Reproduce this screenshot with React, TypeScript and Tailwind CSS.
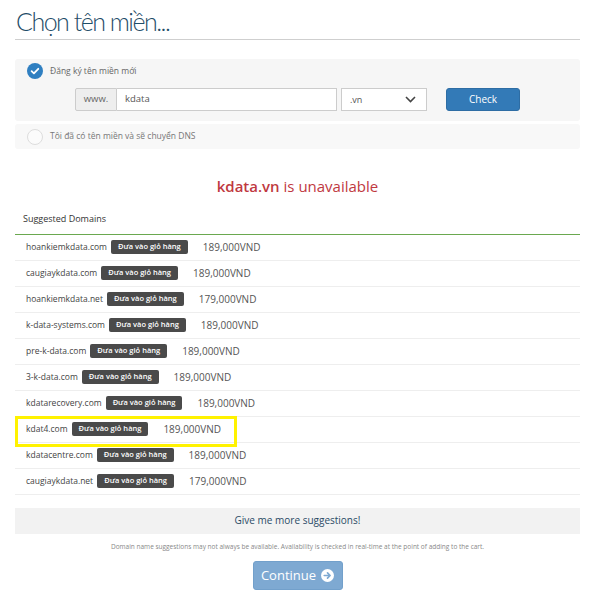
import React from 'react';

const suggestions = [
  { name: 'hoankiemkdata.com', price: '189,000VND' },
  { name: 'caugiaykdata.com', price: '189,000VND' },
  { name: 'hoankiemkdata.net', price: '179,000VND' },
  { name: 'k-data-systems.com', price: '189,000VND' },
  { name: 'pre-k-data.com', price: '189,000VND' },
  { name: '3-k-data.com', price: '189,000VND' },
  { name: 'kdatarecovery.com', price: '189,000VND' },
  { name: 'kdat4.com', price: '189,000VND', highlight: true },
  { name: 'kdatacentre.com', price: '189,000VND' },
  { name: 'caugiaykdata.net', price: '179,000VND' },
];

const CheckCircle = () => (
  <svg width="16" height="16" viewBox="0 0 16 16">
    <circle cx="8" cy="8" r="8" fill="#2f7fc1" />
    <path d="M4.6 8.2l2.3 2.2 4.4-4.6" fill="none" stroke="#fff" strokeWidth="1.8" strokeLinecap="round" strokeLinejoin="round" />
  </svg>
);

export default function App() {
  return (
    <div className="w-[600px] h-[600px] bg-white pl-[15px] pr-[20px] pt-[6px] overflow-hidden" style={{ fontFamily: '"Open Sans", "Noto Sans", sans-serif' }}>
      <h1 className="text-[25px] font-light text-[#1f4d68] leading-[30px] pl-[1px] pb-[3px] border-b border-[#cfcfcf] tracking-[-1.5px]" style={{ fontFamily: 'Lato, "Open Sans", sans-serif' }}>
        Chọn tên miền...
      </h1>

      <div className="mt-[19px] bg-[#f6f6f6] rounded-[3px] pl-[12px] pt-[4px] pb-[10px]">
        <div className="flex items-center gap-[7px] h-[16px]">
          <CheckCircle />
          <span className="text-[8.5px] text-[#666]">Đăng ký tên miền mới</span>
        </div>
        <div className="flex items-center mt-[9px] ml-[48px] h-[23px]">
          <div className="w-[42px] h-full flex items-center justify-center bg-[#eeeeee] border border-[#cccccc] rounded-l-[2px] text-[9.5px] text-[#666]">
            www.
          </div>
          <div className="w-[220px] h-full flex items-center pl-[8px] bg-white border border-l-0 border-[#cccccc] text-[9.5px] text-[#555]">
            kdata
          </div>
          <div className="w-[86px] h-full ml-[4px] flex items-center justify-between pl-[8px] pr-[10px] bg-white border border-[#cccccc] text-[9px] text-[#555]">
            <span>.vn</span>
            <svg width="11" height="7" viewBox="0 0 11 7">
              <path d="M1 1l4.5 4.5L10 1" fill="none" stroke="#444" strokeWidth="1.6" />
            </svg>
          </div>
          <div className="w-[74px] h-full ml-[19px] flex items-center justify-center bg-[#337ab7] border border-[#2e6da4] rounded-[3px] text-[10px] text-white">
            Check
          </div>
        </div>
      </div>

      <div className="mt-[3px] bg-[#f8f8f8] rounded-[3px] pl-[12px] h-[25px] flex items-center gap-[7px]">
        <span className="w-[16px] h-[16px] rounded-full border border-[#dddddd] bg-[#fbfbfb]" />
        <span className="text-[8.5px] text-[#777]">Tôi đã có tên miền và sẽ chuyển DNS</span>
      </div>

      <div className="text-center mt-[26px] text-[15px] text-[#c0393f] leading-[22px]">
        <span className="font-semibold">kdata.vn</span> is unavailable
      </div>

      <div className="mt-[15px] pl-[8px] pb-[8px] text-[9px] text-[#333] border-b border-[#6aa84f]">
        Suggested Domains
      </div>

      <div>
        {suggestions.map((s) => (
          <div key={s.name} className="relative flex items-center h-[26px] pl-[11px] border-b border-[#eeeeee]">
            <span className="text-[8.5px] text-[#444]">{s.name}</span>
            <span className="ml-[4px] px-[7px] h-[14px] flex items-center bg-[#4a4a4a] rounded-[2px] text-[7.5px] font-semibold text-white">
              Đưa vào giỏ hàng
            </span>
            <span className="ml-[15px] text-[10px] text-[#555]">{s.price}</span>
            {s.highlight && (
              <div className="absolute left-0 top-[-1px] w-[222px] h-[31px] border-[3px] border-[#fff200]" />
            )}
          </div>
        ))}
      </div>

      <div className="mt-[13px] h-[26px] bg-[#f2f2f2] flex items-center justify-center text-[10px] text-[#2a4a66]">
        Give me more suggestions!
      </div>

      <div className="mt-[8px] text-center text-[6.5px] text-[#888]">
        Domain name suggestions may not always be available. Availability is checked in real-time at the point of adding to the cart.
      </div>

      <div className="flex justify-center mt-[10px]">
        <div className="w-[90px] h-[29px] flex items-center justify-center gap-[5px] bg-[#7ea9d2] border border-[#72a0cb] rounded-[3px] text-[13px] text-white">
          <span>Continue</span>
          <svg width="13" height="13" viewBox="0 0 14 14">
            <circle cx="7" cy="7" r="7" fill="#fff" />
            <path d="M3.5 7h6M7 4.2L9.8 7 7 9.8" fill="none" stroke="#7ea9d2" strokeWidth="1.8" strokeLinecap="round" strokeLinejoin="round" />
          </svg>
        </div>
      </div>
    </div>
  );
}
